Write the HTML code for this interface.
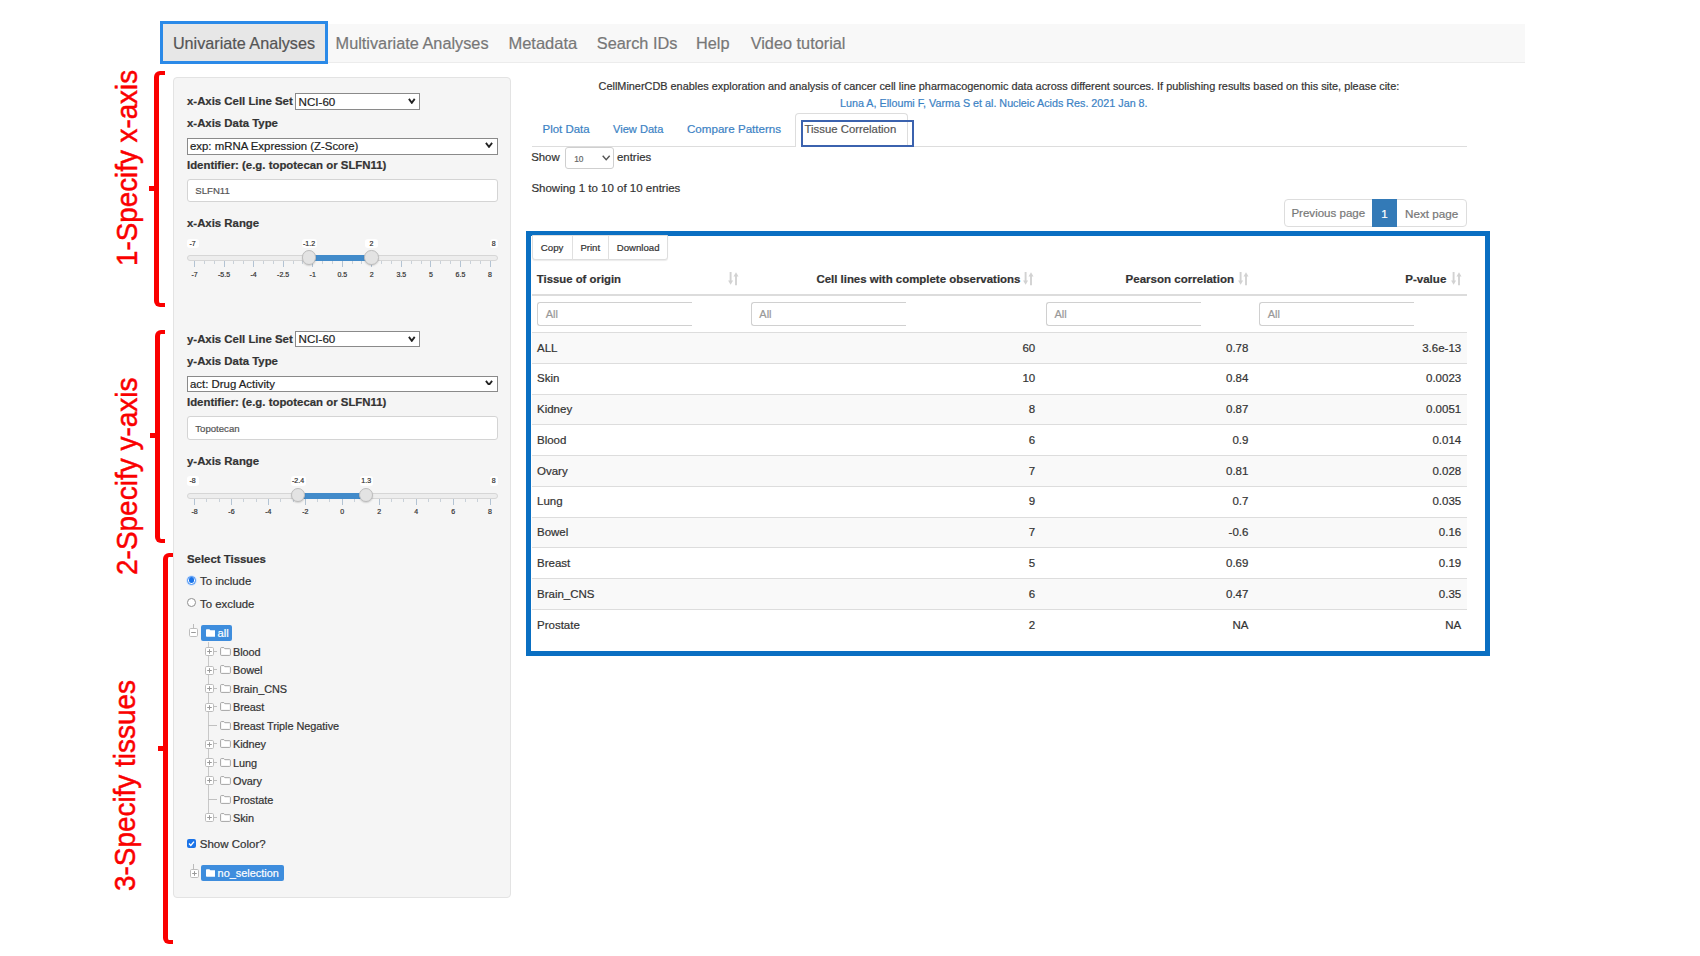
<!DOCTYPE html>
<html><head><meta charset="utf-8"><title>CellMinerCDB</title>
<style>
html,body{margin:0;padding:0;background:#fff;}
body{width:1700px;height:956px;position:relative;overflow:hidden;font-family:"Liberation Sans",sans-serif;}
.t{position:absolute;white-space:nowrap;font-family:"Liberation Sans",sans-serif;-webkit-text-stroke:0.2px currentColor;}
.r{position:absolute;display:block;}
</style></head><body>
<div class="r" style="left:160.00px;top:24.00px;width:1365.00px;height:38.50px;background:#f8f8f8;border-bottom:1px solid #ececec;box-sizing:border-box"></div>
<div class="r" style="left:160.00px;top:21.00px;width:168.00px;height:43.00px;background:#e7e7e7;border:3px solid #2b8ae8;box-sizing:border-box"></div>
<div class="t" style="left:172.90px;top:35.48px;font-size:16.2px;line-height:16.2px;font-weight:400;color:#555;">Univariate Analyses</div>
<div class="t" style="left:335.60px;top:35.40px;font-size:16.3px;line-height:16.3px;font-weight:400;color:#777;">Multivariate Analyses</div>
<div class="t" style="left:508.40px;top:35.23px;font-size:16.5px;line-height:16.5px;font-weight:400;color:#777;">Metadata</div>
<div class="t" style="left:596.80px;top:35.40px;font-size:16.3px;line-height:16.3px;font-weight:400;color:#777;">Search IDs</div>
<div class="t" style="left:696.00px;top:35.40px;font-size:16.3px;line-height:16.3px;font-weight:400;color:#777;">Help</div>
<div class="t" style="left:750.70px;top:35.40px;font-size:16.3px;line-height:16.3px;font-weight:400;color:#777;">Video tutorial</div>
<div class="r" style="left:154.40px;top:71.20px;width:10.20px;height:236.30px;border-left:5.50px solid #fa0000;border-top:4.3px solid #fa0000;border-bottom:4.3px solid #fa0000;border-radius:6px 0 0 6px;box-sizing:border-box"></div>
<div class="r" style="left:149.40px;top:186.00px;width:6.00px;height:5.20px;background:#fa0000"></div>
<div class="r" style="left:154.50px;top:329.50px;width:10.20px;height:213.90px;border-left:5.50px solid #fa0000;border-top:4.3px solid #fa0000;border-bottom:4.3px solid #fa0000;border-radius:6px 0 0 6px;box-sizing:border-box"></div>
<div class="r" style="left:149.50px;top:433.00px;width:6.00px;height:5.20px;background:#fa0000"></div>
<div class="r" style="left:163.00px;top:553.00px;width:9.60px;height:391.40px;border-left:5.00px solid #fa0000;border-top:4.3px solid #fa0000;border-bottom:4.3px solid #fa0000;border-radius:6px 0 0 6px;box-sizing:border-box"></div>
<div class="r" style="left:158.20px;top:745.80px;width:5.80px;height:5.20px;background:#fa0000"></div>
<div class="t" style="left:136.60px;top:266.00px;font-size:30px;line-height:30px;color:#fa0000;transform-origin:0 0;transform:rotate(-90deg) scaleX(0.926) translateY(-25.40px);-webkit-text-stroke:0.5px #fa0000">1-Specify x-axis</div>
<div class="t" style="left:136.60px;top:575.00px;font-size:30px;line-height:30px;color:#fa0000;transform-origin:0 0;transform:rotate(-90deg) scaleX(0.933) translateY(-25.40px);-webkit-text-stroke:0.5px #fa0000">2-Specify y-axis</div>
<div class="t" style="left:134.60px;top:890.80px;font-size:30px;line-height:30px;color:#fa0000;transform-origin:0 0;transform:rotate(-90deg) scaleX(0.93) translateY(-25.40px);-webkit-text-stroke:0.5px #fa0000">3-Specify tissues</div>
<div class="r" style="left:173.00px;top:77.00px;width:338.00px;height:821.00px;background:#f5f5f5;border:1px solid #e3e3e3;border-radius:4px;box-sizing:border-box"></div>
<div class="t" style="left:187.00px;top:95.85px;font-size:11.4px;line-height:11.4px;font-weight:700;color:#333;">x-Axis Cell Line Set</div>
<div class="r" style="left:295.30px;top:93.40px;width:124.90px;height:16.40px;background:#fff;border:1px solid #8a8a8a;box-sizing:border-box"></div>
<div class="t" style="left:298.60px;top:95.78px;font-size:11.6px;line-height:11.6px;font-weight:400;color:#222;">NCI-60</div>
<svg class="r" style="left:408.20px;top:98.20px" width="7.60" height="5.80" viewBox="0 0 7.60 5.80"><polyline points="0.90,0.90 3.80,4.90 6.70,0.90" fill="none" stroke="#222" stroke-width="1.8"/></svg>
<div class="t" style="left:187.00px;top:118.05px;font-size:11.4px;line-height:11.4px;font-weight:700;color:#333;">x-Axis Data Type</div>
<div class="r" style="left:187.00px;top:138.00px;width:310.80px;height:16.60px;background:#fff;border:1px solid #8a8a8a;box-sizing:border-box"></div>
<div class="t" style="left:190.00px;top:140.95px;font-size:11.4px;line-height:11.4px;font-weight:400;color:#222;">exp: mRNA Expression (Z-Score)</div>
<svg class="r" style="left:485.40px;top:142.00px" width="8.00" height="5.80" viewBox="0 0 8.00 5.80"><polyline points="0.90,0.90 4.00,4.90 7.10,0.90" fill="none" stroke="#222" stroke-width="1.8"/></svg>
<div class="t" style="left:187.00px;top:159.55px;font-size:11.4px;line-height:11.4px;font-weight:700;color:#333;">Identifier: (e.g. topotecan or SLFN11)</div>
<div class="r" style="left:187.00px;top:178.70px;width:310.50px;height:23.70px;background:#fff;border:1px solid #d4d4d4;border-radius:3px;box-sizing:border-box"></div>
<div class="t" style="left:195.30px;top:185.87px;font-size:9.6px;line-height:9.6px;font-weight:400;color:#555;">SLFN11</div>
<div class="t" style="left:187.00px;top:218.35px;font-size:11.4px;line-height:11.4px;font-weight:700;color:#333;">x-Axis Range</div>
<div class="r" style="left:187.30px;top:255.30px;width:310.30px;height:5.90px;background:#ededed;border:1px solid #d6d6d6;border-radius:3px;box-sizing:border-box"></div>
<div class="r" style="left:309.00px;top:255.30px;width:62.50px;height:5.90px;background:#428bca"></div>
<div class="r" style="left:194.00px;top:261.20px;width:1.00px;height:6.00px;background:#b3c3d3"></div>
<div class="t" style="left:94.50px;width:200px;text-align:center;top:270.67px;font-size:7px;line-height:7px;font-weight:400;color:#333;">-7</div>
<div class="r" style="left:223.55px;top:261.20px;width:1.00px;height:6.00px;background:#b3c3d3"></div>
<div class="t" style="left:124.05px;width:200px;text-align:center;top:270.67px;font-size:7px;line-height:7px;font-weight:400;color:#333;">-5.5</div>
<div class="r" style="left:253.10px;top:261.20px;width:1.00px;height:6.00px;background:#b3c3d3"></div>
<div class="t" style="left:153.60px;width:200px;text-align:center;top:270.67px;font-size:7px;line-height:7px;font-weight:400;color:#333;">-4</div>
<div class="r" style="left:282.65px;top:261.20px;width:1.00px;height:6.00px;background:#b3c3d3"></div>
<div class="t" style="left:183.15px;width:200px;text-align:center;top:270.67px;font-size:7px;line-height:7px;font-weight:400;color:#333;">-2.5</div>
<div class="r" style="left:312.20px;top:261.20px;width:1.00px;height:6.00px;background:#b3c3d3"></div>
<div class="t" style="left:212.70px;width:200px;text-align:center;top:270.67px;font-size:7px;line-height:7px;font-weight:400;color:#333;">-1</div>
<div class="r" style="left:341.75px;top:261.20px;width:1.00px;height:6.00px;background:#b3c3d3"></div>
<div class="t" style="left:242.25px;width:200px;text-align:center;top:270.67px;font-size:7px;line-height:7px;font-weight:400;color:#333;">0.5</div>
<div class="r" style="left:371.30px;top:261.20px;width:1.00px;height:6.00px;background:#b3c3d3"></div>
<div class="t" style="left:271.80px;width:200px;text-align:center;top:270.67px;font-size:7px;line-height:7px;font-weight:400;color:#333;">2</div>
<div class="r" style="left:400.85px;top:261.20px;width:1.00px;height:6.00px;background:#b3c3d3"></div>
<div class="t" style="left:301.35px;width:200px;text-align:center;top:270.67px;font-size:7px;line-height:7px;font-weight:400;color:#333;">3.5</div>
<div class="r" style="left:430.40px;top:261.20px;width:1.00px;height:6.00px;background:#b3c3d3"></div>
<div class="t" style="left:330.90px;width:200px;text-align:center;top:270.67px;font-size:7px;line-height:7px;font-weight:400;color:#333;">5</div>
<div class="r" style="left:459.95px;top:261.20px;width:1.00px;height:6.00px;background:#b3c3d3"></div>
<div class="t" style="left:360.45px;width:200px;text-align:center;top:270.67px;font-size:7px;line-height:7px;font-weight:400;color:#333;">6.5</div>
<div class="r" style="left:489.50px;top:261.20px;width:1.00px;height:6.00px;background:#b3c3d3"></div>
<div class="t" style="left:390.00px;width:200px;text-align:center;top:270.67px;font-size:7px;line-height:7px;font-weight:400;color:#333;">8</div>
<div class="r" style="left:203.85px;top:261.20px;width:1.00px;height:3.00px;background:#c9d1d9"></div>
<div class="r" style="left:213.70px;top:261.20px;width:1.00px;height:3.00px;background:#c9d1d9"></div>
<div class="r" style="left:233.40px;top:261.20px;width:1.00px;height:3.00px;background:#c9d1d9"></div>
<div class="r" style="left:243.25px;top:261.20px;width:1.00px;height:3.00px;background:#c9d1d9"></div>
<div class="r" style="left:262.95px;top:261.20px;width:1.00px;height:3.00px;background:#c9d1d9"></div>
<div class="r" style="left:272.80px;top:261.20px;width:1.00px;height:3.00px;background:#c9d1d9"></div>
<div class="r" style="left:292.50px;top:261.20px;width:1.00px;height:3.00px;background:#c9d1d9"></div>
<div class="r" style="left:302.35px;top:261.20px;width:1.00px;height:3.00px;background:#c9d1d9"></div>
<div class="r" style="left:322.05px;top:261.20px;width:1.00px;height:3.00px;background:#c9d1d9"></div>
<div class="r" style="left:331.90px;top:261.20px;width:1.00px;height:3.00px;background:#c9d1d9"></div>
<div class="r" style="left:351.60px;top:261.20px;width:1.00px;height:3.00px;background:#c9d1d9"></div>
<div class="r" style="left:361.45px;top:261.20px;width:1.00px;height:3.00px;background:#c9d1d9"></div>
<div class="r" style="left:381.15px;top:261.20px;width:1.00px;height:3.00px;background:#c9d1d9"></div>
<div class="r" style="left:391.00px;top:261.20px;width:1.00px;height:3.00px;background:#c9d1d9"></div>
<div class="r" style="left:410.70px;top:261.20px;width:1.00px;height:3.00px;background:#c9d1d9"></div>
<div class="r" style="left:420.55px;top:261.20px;width:1.00px;height:3.00px;background:#c9d1d9"></div>
<div class="r" style="left:440.25px;top:261.20px;width:1.00px;height:3.00px;background:#c9d1d9"></div>
<div class="r" style="left:450.10px;top:261.20px;width:1.00px;height:3.00px;background:#c9d1d9"></div>
<div class="r" style="left:469.80px;top:261.20px;width:1.00px;height:3.00px;background:#c9d1d9"></div>
<div class="r" style="left:479.65px;top:261.20px;width:1.00px;height:3.00px;background:#c9d1d9"></div>
<div class="r" style="left:187.00px;top:238.50px;width:11.50px;height:9.70px;background:#fff;border-radius:3px"></div>
<div class="t" style="left:189.50px;top:239.67px;font-size:7px;line-height:7px;font-weight:400;color:#333;">-7</div>
<div class="r" style="left:489.50px;top:238.50px;width:8.10px;height:9.70px;background:#fff;border-radius:3px"></div>
<div class="t" style="left:393.60px;width:200px;text-align:center;top:239.67px;font-size:7px;line-height:7px;font-weight:400;color:#333;">8</div>
<div class="r" style="left:301.50px;top:238.50px;width:15.00px;height:9.70px;background:#fff;border-radius:3px"></div>
<div class="t" style="left:209.00px;width:200px;text-align:center;top:239.67px;font-size:7px;line-height:7px;font-weight:400;color:#333;">-1.2</div>
<div class="r" style="left:365.00px;top:238.50px;width:13.00px;height:9.70px;background:#fff;border-radius:3px"></div>
<div class="t" style="left:271.50px;width:200px;text-align:center;top:239.67px;font-size:7px;line-height:7px;font-weight:400;color:#333;">2</div>
<div class="r" style="left:301.70px;top:250.20px;width:14.60px;height:14.60px;background:#e3e3e3;border:1px solid #bdbdbd;border-radius:50%;box-sizing:border-box;box-shadow:0 1px 1.5px rgba(0,0,0,.15)"></div>
<div class="r" style="left:364.20px;top:250.20px;width:14.60px;height:14.60px;background:#e3e3e3;border:1px solid #bdbdbd;border-radius:50%;box-sizing:border-box;box-shadow:0 1px 1.5px rgba(0,0,0,.15)"></div>
<div class="t" style="left:187.00px;top:333.55px;font-size:11.4px;line-height:11.4px;font-weight:700;color:#333;">y-Axis Cell Line Set</div>
<div class="r" style="left:295.30px;top:331.10px;width:124.90px;height:16.40px;background:#fff;border:1px solid #8a8a8a;box-sizing:border-box"></div>
<div class="t" style="left:298.60px;top:333.48px;font-size:11.6px;line-height:11.6px;font-weight:400;color:#222;">NCI-60</div>
<svg class="r" style="left:408.20px;top:335.90px" width="7.60" height="5.80" viewBox="0 0 7.60 5.80"><polyline points="0.90,0.90 3.80,4.90 6.70,0.90" fill="none" stroke="#222" stroke-width="1.8"/></svg>
<div class="t" style="left:187.00px;top:355.75px;font-size:11.4px;line-height:11.4px;font-weight:700;color:#333;">y-Axis Data Type</div>
<div class="r" style="left:187.00px;top:375.70px;width:310.80px;height:16.60px;background:#fff;border:1px solid #8a8a8a;box-sizing:border-box"></div>
<div class="t" style="left:190.00px;top:378.65px;font-size:11.4px;line-height:11.4px;font-weight:400;color:#222;">act: Drug Activity</div>
<svg class="r" style="left:485.40px;top:379.70px" width="8.00" height="5.80" viewBox="0 0 8.00 5.80"><polyline points="0.90,0.90 4.00,4.90 7.10,0.90" fill="none" stroke="#222" stroke-width="1.8"/></svg>
<div class="t" style="left:187.00px;top:397.25px;font-size:11.4px;line-height:11.4px;font-weight:700;color:#333;">Identifier: (e.g. topotecan or SLFN11)</div>
<div class="r" style="left:187.00px;top:416.40px;width:310.50px;height:23.70px;background:#fff;border:1px solid #d4d4d4;border-radius:3px;box-sizing:border-box"></div>
<div class="t" style="left:195.30px;top:423.57px;font-size:9.6px;line-height:9.6px;font-weight:400;color:#555;">Topotecan</div>
<div class="t" style="left:187.00px;top:456.05px;font-size:11.4px;line-height:11.4px;font-weight:700;color:#333;">y-Axis Range</div>
<div class="r" style="left:187.30px;top:493.00px;width:310.30px;height:5.90px;background:#ededed;border:1px solid #d6d6d6;border-radius:3px;box-sizing:border-box"></div>
<div class="r" style="left:298.00px;top:493.00px;width:68.20px;height:5.90px;background:#428bca"></div>
<div class="r" style="left:194.00px;top:498.90px;width:1.00px;height:6.00px;background:#b3c3d3"></div>
<div class="t" style="left:94.50px;width:200px;text-align:center;top:508.37px;font-size:7px;line-height:7px;font-weight:400;color:#333;">-8</div>
<div class="r" style="left:230.94px;top:498.90px;width:1.00px;height:6.00px;background:#b3c3d3"></div>
<div class="t" style="left:131.44px;width:200px;text-align:center;top:508.37px;font-size:7px;line-height:7px;font-weight:400;color:#333;">-6</div>
<div class="r" style="left:267.88px;top:498.90px;width:1.00px;height:6.00px;background:#b3c3d3"></div>
<div class="t" style="left:168.38px;width:200px;text-align:center;top:508.37px;font-size:7px;line-height:7px;font-weight:400;color:#333;">-4</div>
<div class="r" style="left:304.82px;top:498.90px;width:1.00px;height:6.00px;background:#b3c3d3"></div>
<div class="t" style="left:205.32px;width:200px;text-align:center;top:508.37px;font-size:7px;line-height:7px;font-weight:400;color:#333;">-2</div>
<div class="r" style="left:341.76px;top:498.90px;width:1.00px;height:6.00px;background:#b3c3d3"></div>
<div class="t" style="left:242.26px;width:200px;text-align:center;top:508.37px;font-size:7px;line-height:7px;font-weight:400;color:#333;">0</div>
<div class="r" style="left:378.70px;top:498.90px;width:1.00px;height:6.00px;background:#b3c3d3"></div>
<div class="t" style="left:279.20px;width:200px;text-align:center;top:508.37px;font-size:7px;line-height:7px;font-weight:400;color:#333;">2</div>
<div class="r" style="left:415.64px;top:498.90px;width:1.00px;height:6.00px;background:#b3c3d3"></div>
<div class="t" style="left:316.14px;width:200px;text-align:center;top:508.37px;font-size:7px;line-height:7px;font-weight:400;color:#333;">4</div>
<div class="r" style="left:452.58px;top:498.90px;width:1.00px;height:6.00px;background:#b3c3d3"></div>
<div class="t" style="left:353.08px;width:200px;text-align:center;top:508.37px;font-size:7px;line-height:7px;font-weight:400;color:#333;">6</div>
<div class="r" style="left:489.52px;top:498.90px;width:1.00px;height:6.00px;background:#b3c3d3"></div>
<div class="t" style="left:390.02px;width:200px;text-align:center;top:508.37px;font-size:7px;line-height:7px;font-weight:400;color:#333;">8</div>
<div class="r" style="left:206.31px;top:498.90px;width:1.00px;height:3.00px;background:#c9d1d9"></div>
<div class="r" style="left:218.63px;top:498.90px;width:1.00px;height:3.00px;background:#c9d1d9"></div>
<div class="r" style="left:243.25px;top:498.90px;width:1.00px;height:3.00px;background:#c9d1d9"></div>
<div class="r" style="left:255.57px;top:498.90px;width:1.00px;height:3.00px;background:#c9d1d9"></div>
<div class="r" style="left:280.19px;top:498.90px;width:1.00px;height:3.00px;background:#c9d1d9"></div>
<div class="r" style="left:292.51px;top:498.90px;width:1.00px;height:3.00px;background:#c9d1d9"></div>
<div class="r" style="left:317.13px;top:498.90px;width:1.00px;height:3.00px;background:#c9d1d9"></div>
<div class="r" style="left:329.45px;top:498.90px;width:1.00px;height:3.00px;background:#c9d1d9"></div>
<div class="r" style="left:354.07px;top:498.90px;width:1.00px;height:3.00px;background:#c9d1d9"></div>
<div class="r" style="left:366.39px;top:498.90px;width:1.00px;height:3.00px;background:#c9d1d9"></div>
<div class="r" style="left:391.01px;top:498.90px;width:1.00px;height:3.00px;background:#c9d1d9"></div>
<div class="r" style="left:403.33px;top:498.90px;width:1.00px;height:3.00px;background:#c9d1d9"></div>
<div class="r" style="left:427.95px;top:498.90px;width:1.00px;height:3.00px;background:#c9d1d9"></div>
<div class="r" style="left:440.27px;top:498.90px;width:1.00px;height:3.00px;background:#c9d1d9"></div>
<div class="r" style="left:464.89px;top:498.90px;width:1.00px;height:3.00px;background:#c9d1d9"></div>
<div class="r" style="left:477.21px;top:498.90px;width:1.00px;height:3.00px;background:#c9d1d9"></div>
<div class="r" style="left:187.00px;top:476.20px;width:11.50px;height:9.70px;background:#fff;border-radius:3px"></div>
<div class="t" style="left:189.50px;top:477.37px;font-size:7px;line-height:7px;font-weight:400;color:#333;">-8</div>
<div class="r" style="left:489.50px;top:476.20px;width:8.10px;height:9.70px;background:#fff;border-radius:3px"></div>
<div class="t" style="left:393.60px;width:200px;text-align:center;top:477.37px;font-size:7px;line-height:7px;font-weight:400;color:#333;">8</div>
<div class="r" style="left:290.50px;top:476.20px;width:15.00px;height:9.70px;background:#fff;border-radius:3px"></div>
<div class="t" style="left:198.00px;width:200px;text-align:center;top:477.37px;font-size:7px;line-height:7px;font-weight:400;color:#333;">-2.4</div>
<div class="r" style="left:359.70px;top:476.20px;width:13.00px;height:9.70px;background:#fff;border-radius:3px"></div>
<div class="t" style="left:266.20px;width:200px;text-align:center;top:477.37px;font-size:7px;line-height:7px;font-weight:400;color:#333;">1.3</div>
<div class="r" style="left:290.70px;top:487.90px;width:14.60px;height:14.60px;background:#e3e3e3;border:1px solid #bdbdbd;border-radius:50%;box-sizing:border-box;box-shadow:0 1px 1.5px rgba(0,0,0,.15)"></div>
<div class="r" style="left:358.90px;top:487.90px;width:14.60px;height:14.60px;background:#e3e3e3;border:1px solid #bdbdbd;border-radius:50%;box-sizing:border-box;box-shadow:0 1px 1.5px rgba(0,0,0,.15)"></div>
<div class="t" style="left:187.00px;top:553.85px;font-size:11.4px;line-height:11.4px;font-weight:700;color:#333;">Select Tissues</div>
<div class="r" style="left:186.90px;top:575.70px;width:9.00px;height:9.00px;background:#fff;border:1px solid #3d8bf2;border-radius:50%;box-sizing:border-box;box-shadow:0 0 0 0.8px #cfe2fc"></div>
<div class="r" style="left:188.60px;top:577.40px;width:5.60px;height:5.60px;background:#1a73e8;border-radius:50%"></div>
<div class="t" style="left:200.00px;top:575.55px;font-size:11.4px;line-height:11.4px;font-weight:400;color:#333;">To include</div>
<div class="r" style="left:187.00px;top:598.20px;width:8.80px;height:8.80px;background:#fff;border:1px solid #8e8e8e;border-radius:50%;box-sizing:border-box"></div>
<div class="t" style="left:200.00px;top:598.75px;font-size:11.4px;line-height:11.4px;font-weight:400;color:#333;">To exclude</div>
<div class="r" style="left:193.30px;top:623.50px;width:1.00px;height:5.00px;background:#bbb"></div>
<svg class="r" style="left:189.30px;top:627.80px" width="9" height="9" viewBox="0 0 9 9"><rect x="0.5" y="0.5" width="8" height="8" rx="1.2" fill="#fff" stroke="#bdbdbd" stroke-width="1"/><line x1="2.2" y1="4.5" x2="6.8" y2="4.5" stroke="#999" stroke-width="1"/></svg>
<div class="r" style="left:201.30px;top:625.00px;width:30.90px;height:15.60px;background:#3e8ddd;border-radius:2px"></div>
<svg class="r" style="left:205.60px;top:629.00px" width="9.5" height="8" viewBox="0 0 10 8"><path d="M0 0.8 Q0 0 0.8 0 H3.6 L4.6 1.2 H9.2 Q10 1.2 10 2 V7.2 Q10 8 9.2 8 H0.8 Q0 8 0 7.2 Z" fill="#fff"/></svg>
<div class="t" style="left:217.60px;top:628.12px;font-size:11.2px;line-height:11.2px;font-weight:400;color:#fff;">all</div>
<div class="r" style="left:207.70px;top:641.50px;width:1.00px;height:176.23px;background:#c8c8c8"></div>
<div class="r" style="left:212.80px;top:651.00px;width:3.80px;height:1.00px;background:#c0c0c0"></div>
<svg class="r" style="left:204.50px;top:647.20px" width="9" height="9" viewBox="0 0 9 9"><rect x="0.5" y="0.5" width="8" height="8" rx="1.2" fill="#fff" stroke="#bdbdbd" stroke-width="1"/><line x1="2.2" y1="4.5" x2="6.8" y2="4.5" stroke="#999" stroke-width="1"/><line x1="4.5" y1="2.2" x2="4.5" y2="6.8" stroke="#999" stroke-width="1"/></svg>
<svg class="r" style="left:219.60px;top:647.00px" width="11" height="9" viewBox="0 0 11 9"><path d="M0.6 1.4 Q0.6 0.6 1.4 0.6 H3.8 L4.8 1.7 H9.6 Q10.4 1.7 10.4 2.5 V7.6 Q10.4 8.4 9.6 8.4 H1.4 Q0.6 8.4 0.6 7.6 Z" fill="#fff" stroke="#9a9a9a" stroke-width="0.9"/></svg>
<div class="t" style="left:233.00px;top:646.97px;font-size:10.9px;line-height:10.9px;font-weight:400;color:#333;letter-spacing:-0.05px">Blood</div>
<div class="r" style="left:212.80px;top:669.47px;width:3.80px;height:1.00px;background:#c0c0c0"></div>
<svg class="r" style="left:204.50px;top:665.67px" width="9" height="9" viewBox="0 0 9 9"><rect x="0.5" y="0.5" width="8" height="8" rx="1.2" fill="#fff" stroke="#bdbdbd" stroke-width="1"/><line x1="2.2" y1="4.5" x2="6.8" y2="4.5" stroke="#999" stroke-width="1"/><line x1="4.5" y1="2.2" x2="4.5" y2="6.8" stroke="#999" stroke-width="1"/></svg>
<svg class="r" style="left:219.60px;top:665.47px" width="11" height="9" viewBox="0 0 11 9"><path d="M0.6 1.4 Q0.6 0.6 1.4 0.6 H3.8 L4.8 1.7 H9.6 Q10.4 1.7 10.4 2.5 V7.6 Q10.4 8.4 9.6 8.4 H1.4 Q0.6 8.4 0.6 7.6 Z" fill="#fff" stroke="#9a9a9a" stroke-width="0.9"/></svg>
<div class="t" style="left:233.00px;top:665.44px;font-size:10.9px;line-height:10.9px;font-weight:400;color:#333;letter-spacing:-0.05px">Bowel</div>
<div class="r" style="left:212.80px;top:687.94px;width:3.80px;height:1.00px;background:#c0c0c0"></div>
<svg class="r" style="left:204.50px;top:684.14px" width="9" height="9" viewBox="0 0 9 9"><rect x="0.5" y="0.5" width="8" height="8" rx="1.2" fill="#fff" stroke="#bdbdbd" stroke-width="1"/><line x1="2.2" y1="4.5" x2="6.8" y2="4.5" stroke="#999" stroke-width="1"/><line x1="4.5" y1="2.2" x2="4.5" y2="6.8" stroke="#999" stroke-width="1"/></svg>
<svg class="r" style="left:219.60px;top:683.94px" width="11" height="9" viewBox="0 0 11 9"><path d="M0.6 1.4 Q0.6 0.6 1.4 0.6 H3.8 L4.8 1.7 H9.6 Q10.4 1.7 10.4 2.5 V7.6 Q10.4 8.4 9.6 8.4 H1.4 Q0.6 8.4 0.6 7.6 Z" fill="#fff" stroke="#9a9a9a" stroke-width="0.9"/></svg>
<div class="t" style="left:233.00px;top:683.91px;font-size:10.9px;line-height:10.9px;font-weight:400;color:#333;letter-spacing:-0.05px">Brain_CNS</div>
<div class="r" style="left:212.80px;top:706.41px;width:3.80px;height:1.00px;background:#c0c0c0"></div>
<svg class="r" style="left:204.50px;top:702.61px" width="9" height="9" viewBox="0 0 9 9"><rect x="0.5" y="0.5" width="8" height="8" rx="1.2" fill="#fff" stroke="#bdbdbd" stroke-width="1"/><line x1="2.2" y1="4.5" x2="6.8" y2="4.5" stroke="#999" stroke-width="1"/><line x1="4.5" y1="2.2" x2="4.5" y2="6.8" stroke="#999" stroke-width="1"/></svg>
<svg class="r" style="left:219.60px;top:702.41px" width="11" height="9" viewBox="0 0 11 9"><path d="M0.6 1.4 Q0.6 0.6 1.4 0.6 H3.8 L4.8 1.7 H9.6 Q10.4 1.7 10.4 2.5 V7.6 Q10.4 8.4 9.6 8.4 H1.4 Q0.6 8.4 0.6 7.6 Z" fill="#fff" stroke="#9a9a9a" stroke-width="0.9"/></svg>
<div class="t" style="left:233.00px;top:702.38px;font-size:10.9px;line-height:10.9px;font-weight:400;color:#333;letter-spacing:-0.05px">Breast</div>
<div class="r" style="left:208.20px;top:724.88px;width:8.40px;height:1.00px;background:#c0c0c0"></div>
<svg class="r" style="left:219.60px;top:720.88px" width="11" height="9" viewBox="0 0 11 9"><path d="M0.6 1.4 Q0.6 0.6 1.4 0.6 H3.8 L4.8 1.7 H9.6 Q10.4 1.7 10.4 2.5 V7.6 Q10.4 8.4 9.6 8.4 H1.4 Q0.6 8.4 0.6 7.6 Z" fill="#fff" stroke="#9a9a9a" stroke-width="0.9"/></svg>
<div class="t" style="left:233.00px;top:720.85px;font-size:10.9px;line-height:10.9px;font-weight:400;color:#333;letter-spacing:-0.05px">Breast Triple Negative</div>
<div class="r" style="left:212.80px;top:743.35px;width:3.80px;height:1.00px;background:#c0c0c0"></div>
<svg class="r" style="left:204.50px;top:739.55px" width="9" height="9" viewBox="0 0 9 9"><rect x="0.5" y="0.5" width="8" height="8" rx="1.2" fill="#fff" stroke="#bdbdbd" stroke-width="1"/><line x1="2.2" y1="4.5" x2="6.8" y2="4.5" stroke="#999" stroke-width="1"/><line x1="4.5" y1="2.2" x2="4.5" y2="6.8" stroke="#999" stroke-width="1"/></svg>
<svg class="r" style="left:219.60px;top:739.35px" width="11" height="9" viewBox="0 0 11 9"><path d="M0.6 1.4 Q0.6 0.6 1.4 0.6 H3.8 L4.8 1.7 H9.6 Q10.4 1.7 10.4 2.5 V7.6 Q10.4 8.4 9.6 8.4 H1.4 Q0.6 8.4 0.6 7.6 Z" fill="#fff" stroke="#9a9a9a" stroke-width="0.9"/></svg>
<div class="t" style="left:233.00px;top:739.32px;font-size:10.9px;line-height:10.9px;font-weight:400;color:#333;letter-spacing:-0.05px">Kidney</div>
<div class="r" style="left:212.80px;top:761.82px;width:3.80px;height:1.00px;background:#c0c0c0"></div>
<svg class="r" style="left:204.50px;top:758.02px" width="9" height="9" viewBox="0 0 9 9"><rect x="0.5" y="0.5" width="8" height="8" rx="1.2" fill="#fff" stroke="#bdbdbd" stroke-width="1"/><line x1="2.2" y1="4.5" x2="6.8" y2="4.5" stroke="#999" stroke-width="1"/><line x1="4.5" y1="2.2" x2="4.5" y2="6.8" stroke="#999" stroke-width="1"/></svg>
<svg class="r" style="left:219.60px;top:757.82px" width="11" height="9" viewBox="0 0 11 9"><path d="M0.6 1.4 Q0.6 0.6 1.4 0.6 H3.8 L4.8 1.7 H9.6 Q10.4 1.7 10.4 2.5 V7.6 Q10.4 8.4 9.6 8.4 H1.4 Q0.6 8.4 0.6 7.6 Z" fill="#fff" stroke="#9a9a9a" stroke-width="0.9"/></svg>
<div class="t" style="left:233.00px;top:757.79px;font-size:10.9px;line-height:10.9px;font-weight:400;color:#333;letter-spacing:-0.05px">Lung</div>
<div class="r" style="left:212.80px;top:780.29px;width:3.80px;height:1.00px;background:#c0c0c0"></div>
<svg class="r" style="left:204.50px;top:776.49px" width="9" height="9" viewBox="0 0 9 9"><rect x="0.5" y="0.5" width="8" height="8" rx="1.2" fill="#fff" stroke="#bdbdbd" stroke-width="1"/><line x1="2.2" y1="4.5" x2="6.8" y2="4.5" stroke="#999" stroke-width="1"/><line x1="4.5" y1="2.2" x2="4.5" y2="6.8" stroke="#999" stroke-width="1"/></svg>
<svg class="r" style="left:219.60px;top:776.29px" width="11" height="9" viewBox="0 0 11 9"><path d="M0.6 1.4 Q0.6 0.6 1.4 0.6 H3.8 L4.8 1.7 H9.6 Q10.4 1.7 10.4 2.5 V7.6 Q10.4 8.4 9.6 8.4 H1.4 Q0.6 8.4 0.6 7.6 Z" fill="#fff" stroke="#9a9a9a" stroke-width="0.9"/></svg>
<div class="t" style="left:233.00px;top:776.26px;font-size:10.9px;line-height:10.9px;font-weight:400;color:#333;letter-spacing:-0.05px">Ovary</div>
<div class="r" style="left:208.20px;top:798.76px;width:8.40px;height:1.00px;background:#c0c0c0"></div>
<svg class="r" style="left:219.60px;top:794.76px" width="11" height="9" viewBox="0 0 11 9"><path d="M0.6 1.4 Q0.6 0.6 1.4 0.6 H3.8 L4.8 1.7 H9.6 Q10.4 1.7 10.4 2.5 V7.6 Q10.4 8.4 9.6 8.4 H1.4 Q0.6 8.4 0.6 7.6 Z" fill="#fff" stroke="#9a9a9a" stroke-width="0.9"/></svg>
<div class="t" style="left:233.00px;top:794.73px;font-size:10.9px;line-height:10.9px;font-weight:400;color:#333;letter-spacing:-0.05px">Prostate</div>
<div class="r" style="left:212.80px;top:817.23px;width:3.80px;height:1.00px;background:#c0c0c0"></div>
<svg class="r" style="left:204.50px;top:813.43px" width="9" height="9" viewBox="0 0 9 9"><rect x="0.5" y="0.5" width="8" height="8" rx="1.2" fill="#fff" stroke="#bdbdbd" stroke-width="1"/><line x1="2.2" y1="4.5" x2="6.8" y2="4.5" stroke="#999" stroke-width="1"/><line x1="4.5" y1="2.2" x2="4.5" y2="6.8" stroke="#999" stroke-width="1"/></svg>
<svg class="r" style="left:219.60px;top:813.23px" width="11" height="9" viewBox="0 0 11 9"><path d="M0.6 1.4 Q0.6 0.6 1.4 0.6 H3.8 L4.8 1.7 H9.6 Q10.4 1.7 10.4 2.5 V7.6 Q10.4 8.4 9.6 8.4 H1.4 Q0.6 8.4 0.6 7.6 Z" fill="#fff" stroke="#9a9a9a" stroke-width="0.9"/></svg>
<div class="t" style="left:233.00px;top:813.20px;font-size:10.9px;line-height:10.9px;font-weight:400;color:#333;letter-spacing:-0.05px">Skin</div>
<div class="r" style="left:187.00px;top:839.30px;width:8.80px;height:8.80px;background:#1a73e8;border-radius:2px"></div>
<svg class="r" style="left:187px;top:839.3px" width="9" height="9" viewBox="0 0 9 9"><polyline points="2,4.6 3.8,6.4 7,2.6" fill="none" stroke="#fff" stroke-width="1.4"/></svg>
<div class="t" style="left:199.80px;top:839.06px;font-size:11.5px;line-height:11.5px;font-weight:400;color:#333;">Show Color?</div>
<div class="r" style="left:193.40px;top:863.50px;width:1.00px;height:6.10px;background:#bbb"></div>
<svg class="r" style="left:189.50px;top:869.20px" width="9" height="9" viewBox="0 0 9 9"><rect x="0.5" y="0.5" width="8" height="8" rx="1.2" fill="#fff" stroke="#bdbdbd" stroke-width="1"/><line x1="2.2" y1="4.5" x2="6.8" y2="4.5" stroke="#999" stroke-width="1"/><line x1="4.5" y1="2.2" x2="4.5" y2="6.8" stroke="#999" stroke-width="1"/></svg>
<div class="r" style="left:201.30px;top:865.40px;width:82.90px;height:15.60px;background:#3e8ddd;border-radius:2px"></div>
<svg class="r" style="left:205.60px;top:869.30px" width="9.5" height="8" viewBox="0 0 10 8"><path d="M0 0.8 Q0 0 0.8 0 H3.6 L4.6 1.2 H9.2 Q10 1.2 10 2 V7.2 Q10 8 9.2 8 H0.8 Q0 8 0 7.2 Z" fill="#fff"/></svg>
<div class="t" style="left:217.60px;top:868.37px;font-size:10.9px;line-height:10.9px;font-weight:400;color:#fff;">no_selection</div>
<div class="t" style="left:398.90px;width:1200px;text-align:center;top:80.77px;font-size:10.9px;line-height:10.9px;font-weight:400;color:#333">CellMinerCDB enables exploration and analysis of cancer cell line pharmacogenomic data across different sources. If publishing results based on this site, please cite:</div>
<div class="t" style="left:393.80px;width:1200px;text-align:center;top:98.40px;font-size:10.75px;line-height:10.75px;font-weight:400;color:#3b82c4">Luna A, Elloumi F, Varma S et al. Nucleic Acids Res. 2021 Jan 8.</div>
<div class="r" style="left:532.00px;top:145.60px;width:935.00px;height:1.00px;background:#ddd"></div>
<div class="r" style="left:794.50px;top:112.70px;width:113.10px;height:33.90px;background:#fff;border:1px solid #ddd;border-bottom:none;border-radius:4px 4px 0 0;box-sizing:border-box"></div>
<div class="t" style="left:542.60px;top:123.51px;font-size:11.45px;line-height:11.45px;font-weight:400;color:#3b82c4;">Plot Data</div>
<div class="t" style="left:613.00px;top:123.80px;font-size:11.1px;line-height:11.1px;font-weight:400;color:#3b82c4;">View Data</div>
<div class="t" style="left:687.00px;top:123.38px;font-size:11.6px;line-height:11.6px;font-weight:400;color:#3b82c4;">Compare Patterns</div>
<div class="r" style="left:801.40px;top:119.70px;width:112.40px;height:27.10px;border:2px solid #3b62ae;box-sizing:border-box"></div>
<div class="t" style="left:804.60px;top:123.79px;font-size:11.35px;line-height:11.35px;font-weight:400;color:#555;">Tissue Correlation</div>
<div class="t" style="left:531.20px;top:151.65px;font-size:11.4px;line-height:11.4px;font-weight:400;color:#333;">Show</div>
<div class="r" style="left:564.50px;top:147.00px;width:49.30px;height:21.80px;background:#fff;border:1px solid #cfcfcf;border-radius:3px;box-sizing:border-box"></div>
<div class="t" style="left:574.20px;top:154.89px;font-size:8.4px;line-height:8.4px;font-weight:400;color:#666;">10</div>
<svg class="r" style="left:602.40px;top:155.40px" width="8.40" height="5.40" viewBox="0 0 8.40 5.40"><polyline points="0.70,0.70 4.20,4.70 7.70,0.70" fill="none" stroke="#555" stroke-width="1.4"/></svg>
<div class="t" style="left:617.00px;top:151.65px;font-size:11.4px;line-height:11.4px;font-weight:400;color:#333;">entries</div>
<div class="t" style="left:531.40px;top:183.06px;font-size:11.5px;line-height:11.5px;font-weight:400;color:#333;">Showing 1 to 10 of 10 entries</div>
<div class="r" style="left:1283.60px;top:199.30px;width:183.00px;height:28.20px;background:#fff;border:1px solid #ddd;border-radius:4px;box-sizing:border-box"></div>
<div class="r" style="left:1372.30px;top:199.30px;width:24.50px;height:28.20px;background:#337ab7"></div>
<div class="t" style="left:1291.40px;top:208.02px;font-size:11.55px;line-height:11.55px;font-weight:400;color:#777;">Previous page</div>
<div class="t" style="left:1284.50px;width:200px;text-align:center;top:207.89px;font-size:11.7px;line-height:11.7px;font-weight:400;color:#fff;">1</div>
<div class="t" style="left:1405.00px;top:207.89px;font-size:11.7px;line-height:11.7px;font-weight:400;color:#777;">Next page</div>
<div class="r" style="left:525.80px;top:231.00px;width:964.00px;height:425.00px;border:5px solid #0a6fc2;box-sizing:border-box"></div>
<div class="r" style="left:532.00px;top:234.50px;width:135.80px;height:25.10px;background:#fff;border:1px solid #dedede;border-radius:0 0 3px 3px;box-sizing:border-box;box-shadow:0 1px 1px rgba(0,0,0,.08)"></div>
<div class="r" style="left:571.80px;top:236.00px;width:1.00px;height:23.50px;background:#e0e0e0"></div>
<div class="r" style="left:608.40px;top:236.00px;width:1.00px;height:23.50px;background:#e0e0e0"></div>
<div class="t" style="left:540.80px;top:242.59px;font-size:9.7px;line-height:9.7px;font-weight:400;color:#333;">Copy</div>
<div class="t" style="left:580.40px;top:242.67px;font-size:9.6px;line-height:9.6px;font-weight:400;color:#333;">Print</div>
<div class="t" style="left:616.80px;top:242.67px;font-size:9.6px;line-height:9.6px;font-weight:400;color:#333;">Download</div>
<div class="t" style="left:536.80px;top:273.99px;font-size:11.35px;line-height:11.35px;font-weight:700;color:#333;">Tissue of origin</div>
<svg class="r" style="left:727.60px;top:272px" width="11" height="14" viewBox="0 0 11 14"><path d="M2.6 0 V9.6" stroke="#d2d2d2" stroke-width="1.9"/><path d="M0.1 8.4 L2.6 12.8 L5.1 8.4 Z" fill="#d2d2d2"/><path d="M8.0 13.3 V3.4" stroke="#d2d2d2" stroke-width="1.9"/><path d="M5.5 4.6 L8.0 0.2 L10.5 4.6 Z" fill="#d2d2d2"/></svg>
<div class="t" style="right:679.60px;top:273.91px;font-size:11.45px;line-height:11.45px;font-weight:700;color:#333;text-align:right;">Cell lines with complete observations</div>
<svg class="r" style="left:1023.40px;top:272px" width="11" height="14" viewBox="0 0 11 14"><path d="M2.6 0 V9.6" stroke="#d2d2d2" stroke-width="1.9"/><path d="M0.1 8.4 L2.6 12.8 L5.1 8.4 Z" fill="#d2d2d2"/><path d="M8.0 13.3 V3.4" stroke="#d2d2d2" stroke-width="1.9"/><path d="M5.5 4.6 L8.0 0.2 L10.5 4.6 Z" fill="#d2d2d2"/></svg>
<div class="t" style="right:466.00px;top:273.82px;font-size:11.55px;line-height:11.55px;font-weight:700;color:#333;text-align:right;">Pearson correlation</div>
<svg class="r" style="left:1237.60px;top:272px" width="11" height="14" viewBox="0 0 11 14"><path d="M2.6 0 V9.6" stroke="#d2d2d2" stroke-width="1.9"/><path d="M0.1 8.4 L2.6 12.8 L5.1 8.4 Z" fill="#d2d2d2"/><path d="M8.0 13.3 V3.4" stroke="#d2d2d2" stroke-width="1.9"/><path d="M5.5 4.6 L8.0 0.2 L10.5 4.6 Z" fill="#d2d2d2"/></svg>
<div class="t" style="right:253.70px;top:273.82px;font-size:11.55px;line-height:11.55px;font-weight:700;color:#333;text-align:right;">P-value</div>
<svg class="r" style="left:1450.60px;top:272px" width="11" height="14" viewBox="0 0 11 14"><path d="M2.6 0 V9.6" stroke="#d2d2d2" stroke-width="1.9"/><path d="M0.1 8.4 L2.6 12.8 L5.1 8.4 Z" fill="#d2d2d2"/><path d="M8.0 13.3 V3.4" stroke="#d2d2d2" stroke-width="1.9"/><path d="M5.5 4.6 L8.0 0.2 L10.5 4.6 Z" fill="#d2d2d2"/></svg>
<div class="r" style="left:532.00px;top:294.20px;width:935.00px;height:2.00px;background:#dcdcdc"></div>
<div class="r" style="left:537.40px;top:302.20px;width:154.60px;height:23.80px;background:#fff;border:1px solid #d0d0d0;border-right:none;border-radius:3px 0 0 3px;box-sizing:border-box"></div>
<div class="t" style="left:545.70px;top:308.59px;font-size:11.0px;line-height:11.0px;font-weight:400;color:#999;">All</div>
<div class="r" style="left:751.00px;top:302.20px;width:154.60px;height:23.80px;background:#fff;border:1px solid #d0d0d0;border-right:none;border-radius:3px 0 0 3px;box-sizing:border-box"></div>
<div class="t" style="left:759.30px;top:308.59px;font-size:11.0px;line-height:11.0px;font-weight:400;color:#999;">All</div>
<div class="r" style="left:1046.20px;top:302.20px;width:154.60px;height:23.80px;background:#fff;border:1px solid #d0d0d0;border-right:none;border-radius:3px 0 0 3px;box-sizing:border-box"></div>
<div class="t" style="left:1054.50px;top:308.59px;font-size:11.0px;line-height:11.0px;font-weight:400;color:#999;">All</div>
<div class="r" style="left:1259.40px;top:302.20px;width:154.60px;height:23.80px;background:#fff;border:1px solid #d0d0d0;border-right:none;border-radius:3px 0 0 3px;box-sizing:border-box"></div>
<div class="t" style="left:1267.70px;top:308.59px;font-size:11.0px;line-height:11.0px;font-weight:400;color:#999;">All</div>
<div class="r" style="left:532.00px;top:332.00px;width:935.00px;height:30.78px;background:#f9f9f9;border-top:1px solid #dddddd;box-sizing:border-box"></div>
<div class="t" style="left:537.00px;top:342.56px;font-size:11.5px;line-height:11.5px;font-weight:400;color:#333;">ALL</div>
<div class="t" style="right:664.80px;top:342.56px;font-size:11.5px;line-height:11.5px;font-weight:400;color:#333;text-align:right;">60</div>
<div class="t" style="right:451.60px;top:342.56px;font-size:11.5px;line-height:11.5px;font-weight:400;color:#333;text-align:right;">0.78</div>
<div class="t" style="right:238.80px;top:342.56px;font-size:11.5px;line-height:11.5px;font-weight:400;color:#333;text-align:right;">3.6e-13</div>
<div class="r" style="left:532.00px;top:362.78px;width:935.00px;height:30.78px;background:#fff;border-top:1px solid #dddddd;box-sizing:border-box"></div>
<div class="t" style="left:537.00px;top:373.34px;font-size:11.5px;line-height:11.5px;font-weight:400;color:#333;">Skin</div>
<div class="t" style="right:664.80px;top:373.34px;font-size:11.5px;line-height:11.5px;font-weight:400;color:#333;text-align:right;">10</div>
<div class="t" style="right:451.60px;top:373.34px;font-size:11.5px;line-height:11.5px;font-weight:400;color:#333;text-align:right;">0.84</div>
<div class="t" style="right:238.80px;top:373.34px;font-size:11.5px;line-height:11.5px;font-weight:400;color:#333;text-align:right;">0.0023</div>
<div class="r" style="left:532.00px;top:393.56px;width:935.00px;height:30.78px;background:#f9f9f9;border-top:1px solid #dddddd;box-sizing:border-box"></div>
<div class="t" style="left:537.00px;top:404.12px;font-size:11.5px;line-height:11.5px;font-weight:400;color:#333;">Kidney</div>
<div class="t" style="right:664.80px;top:404.12px;font-size:11.5px;line-height:11.5px;font-weight:400;color:#333;text-align:right;">8</div>
<div class="t" style="right:451.60px;top:404.12px;font-size:11.5px;line-height:11.5px;font-weight:400;color:#333;text-align:right;">0.87</div>
<div class="t" style="right:238.80px;top:404.12px;font-size:11.5px;line-height:11.5px;font-weight:400;color:#333;text-align:right;">0.0051</div>
<div class="r" style="left:532.00px;top:424.34px;width:935.00px;height:30.78px;background:#fff;border-top:1px solid #dddddd;box-sizing:border-box"></div>
<div class="t" style="left:537.00px;top:434.90px;font-size:11.5px;line-height:11.5px;font-weight:400;color:#333;">Blood</div>
<div class="t" style="right:664.80px;top:434.90px;font-size:11.5px;line-height:11.5px;font-weight:400;color:#333;text-align:right;">6</div>
<div class="t" style="right:451.60px;top:434.90px;font-size:11.5px;line-height:11.5px;font-weight:400;color:#333;text-align:right;">0.9</div>
<div class="t" style="right:238.80px;top:434.90px;font-size:11.5px;line-height:11.5px;font-weight:400;color:#333;text-align:right;">0.014</div>
<div class="r" style="left:532.00px;top:455.12px;width:935.00px;height:30.78px;background:#f9f9f9;border-top:1px solid #dddddd;box-sizing:border-box"></div>
<div class="t" style="left:537.00px;top:465.68px;font-size:11.5px;line-height:11.5px;font-weight:400;color:#333;">Ovary</div>
<div class="t" style="right:664.80px;top:465.68px;font-size:11.5px;line-height:11.5px;font-weight:400;color:#333;text-align:right;">7</div>
<div class="t" style="right:451.60px;top:465.68px;font-size:11.5px;line-height:11.5px;font-weight:400;color:#333;text-align:right;">0.81</div>
<div class="t" style="right:238.80px;top:465.68px;font-size:11.5px;line-height:11.5px;font-weight:400;color:#333;text-align:right;">0.028</div>
<div class="r" style="left:532.00px;top:485.90px;width:935.00px;height:30.78px;background:#fff;border-top:1px solid #dddddd;box-sizing:border-box"></div>
<div class="t" style="left:537.00px;top:496.46px;font-size:11.5px;line-height:11.5px;font-weight:400;color:#333;">Lung</div>
<div class="t" style="right:664.80px;top:496.46px;font-size:11.5px;line-height:11.5px;font-weight:400;color:#333;text-align:right;">9</div>
<div class="t" style="right:451.60px;top:496.46px;font-size:11.5px;line-height:11.5px;font-weight:400;color:#333;text-align:right;">0.7</div>
<div class="t" style="right:238.80px;top:496.46px;font-size:11.5px;line-height:11.5px;font-weight:400;color:#333;text-align:right;">0.035</div>
<div class="r" style="left:532.00px;top:516.68px;width:935.00px;height:30.78px;background:#f9f9f9;border-top:1px solid #dddddd;box-sizing:border-box"></div>
<div class="t" style="left:537.00px;top:527.24px;font-size:11.5px;line-height:11.5px;font-weight:400;color:#333;">Bowel</div>
<div class="t" style="right:664.80px;top:527.24px;font-size:11.5px;line-height:11.5px;font-weight:400;color:#333;text-align:right;">7</div>
<div class="t" style="right:451.60px;top:527.24px;font-size:11.5px;line-height:11.5px;font-weight:400;color:#333;text-align:right;">-0.6</div>
<div class="t" style="right:238.80px;top:527.24px;font-size:11.5px;line-height:11.5px;font-weight:400;color:#333;text-align:right;">0.16</div>
<div class="r" style="left:532.00px;top:547.46px;width:935.00px;height:30.78px;background:#fff;border-top:1px solid #dddddd;box-sizing:border-box"></div>
<div class="t" style="left:537.00px;top:558.02px;font-size:11.5px;line-height:11.5px;font-weight:400;color:#333;">Breast</div>
<div class="t" style="right:664.80px;top:558.02px;font-size:11.5px;line-height:11.5px;font-weight:400;color:#333;text-align:right;">5</div>
<div class="t" style="right:451.60px;top:558.02px;font-size:11.5px;line-height:11.5px;font-weight:400;color:#333;text-align:right;">0.69</div>
<div class="t" style="right:238.80px;top:558.02px;font-size:11.5px;line-height:11.5px;font-weight:400;color:#333;text-align:right;">0.19</div>
<div class="r" style="left:532.00px;top:578.24px;width:935.00px;height:30.78px;background:#f9f9f9;border-top:1px solid #dddddd;box-sizing:border-box"></div>
<div class="t" style="left:537.00px;top:588.80px;font-size:11.5px;line-height:11.5px;font-weight:400;color:#333;">Brain_CNS</div>
<div class="t" style="right:664.80px;top:588.80px;font-size:11.5px;line-height:11.5px;font-weight:400;color:#333;text-align:right;">6</div>
<div class="t" style="right:451.60px;top:588.80px;font-size:11.5px;line-height:11.5px;font-weight:400;color:#333;text-align:right;">0.47</div>
<div class="t" style="right:238.80px;top:588.80px;font-size:11.5px;line-height:11.5px;font-weight:400;color:#333;text-align:right;">0.35</div>
<div class="r" style="left:532.00px;top:609.02px;width:935.00px;height:30.78px;background:#fff;border-top:1px solid #dddddd;box-sizing:border-box"></div>
<div class="t" style="left:537.00px;top:619.58px;font-size:11.5px;line-height:11.5px;font-weight:400;color:#333;">Prostate</div>
<div class="t" style="right:664.80px;top:619.58px;font-size:11.5px;line-height:11.5px;font-weight:400;color:#333;text-align:right;">2</div>
<div class="t" style="right:451.60px;top:619.58px;font-size:11.5px;line-height:11.5px;font-weight:400;color:#333;text-align:right;">NA</div>
<div class="t" style="right:238.80px;top:619.58px;font-size:11.5px;line-height:11.5px;font-weight:400;color:#333;text-align:right;">NA</div>
</body></html>
